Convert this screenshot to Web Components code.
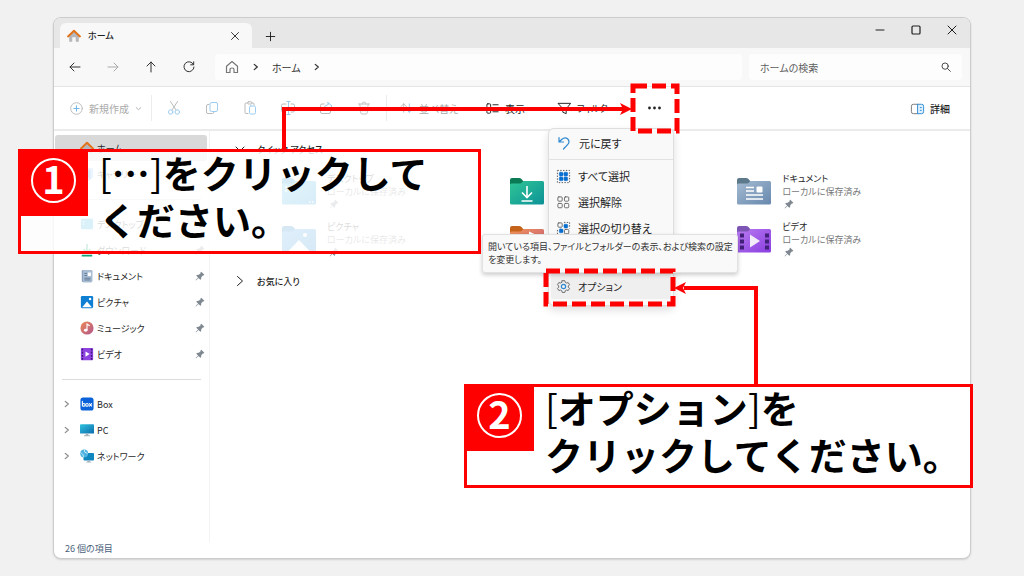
<!DOCTYPE html>
<html lang="ja">
<head>
<meta charset="utf-8">
<title>ホーム</title>
<style>
html{height:100%}
body{margin:0;min-height:100%;box-sizing:border-box;padding:17px 53px;background:#f1f1f1;display:flex;position:relative;
 font:10px/13px "Noto Sans CJK JP","Noto Sans",sans-serif;font-feature-settings:"palt","kern";color:#1f1f1f}
explorer-window{flex:1}
</style>
</head>
<body>
<explorer-window></explorer-window>
<context-menu></context-menu>
<tool-tip>開いている項目、ファイルとフォルダーの表示、および検索の設定<br>を変更します。</tool-tip>
<guide-lines></guide-lines>
<step-callout class="one" number="1"><i>[</i>…<i>]</i>をクリックして<br>ください。</step-callout>
<step-callout class="two" number="2"><i>[</i>オプション<i>]</i>を<br>クリックしてください。</step-callout>

<script>
const folder = (id, tab, a, b, art) => `<svg viewBox="0 0 34 28" width="34" height="28"><defs><linearGradient id="${id}" x1="0" y1="0" x2="1" y2="1"><stop stop-color="${a}"/><stop offset="1" stop-color="${b}"/></linearGradient></defs><path d="M0 9V3Q0 1 2 1H9Q10.500 1 11.500 2L13.500 4.500H30V9Z" fill="${tab}"/><path d="M0 8Q0 6.500 1.500 6.500H10.500L14 4H32.500Q34 4 34 5.500V26Q34 27.500 32.500 27.500H1.500Q0 27.500 0 26Z" fill="url(#${id})"/>${art}</svg>`;
const line = (d, extra = '', s = 16) => `<svg viewBox="0 0 16 16" width="${s}" height="${s}" fill="none" stroke="currentColor" stroke-linecap="round" stroke-linejoin="round" ${extra}>${d}</svg>`;
const dots = [[4,4],[9,4],[4,9],[9,9]], rings = [[2,2],[9,2],[2,9],[9,9]];
const grid4 = (filled) => filled.map((f,i)=>f?`<rect x="${dots[i][0]-.5}" y="${dots[i][1]-.5}" width="4" height="4" rx="1" fill="#0b6fd0" stroke="#0b6fd0" stroke-width=".5"/>`:`<rect x="${rings[i][0]}" y="${rings[i][1]}" width="4.600" height="4.600" rx="1"/>`).join('');
const ICONS = {
 homeColor:`<svg viewBox="0 0 16 16" width="14" height="14"><path d="M2.500 7L8 2.500 13.500 7V14.500H10V9.500H6V14.500H2.500Z" fill="#b5b7ba"/><path d="M1.200 8.500L8 2 14.800 8.500" fill="none" stroke="#e2731a" stroke-width="2.200" stroke-linecap="round" stroke-linejoin="round"/></svg>`,
 close:line('<path d="M4 4L12 12M12 4L4 12"/>','',14),
 closeBig:line('<path d="M4 4L12 12M12 4L4 12"/>'),
 plus:line('<path d="M8 3.500V12.500M3.500 8H12.500"/>','',15),
 min:line('<path d="M4 8H12"/>'),
 max:line('<rect x="4" y="4" width="8" height="8" rx="1" stroke-width="1.200"/>'),
 back:line('<path d="M13 8H3M7 4L3 8L7 12"/>'),
 forward:line('<path d="M3 8H13M9 4L13 8L9 12"/>'),
 up:line('<path d="M8 13V3M4 7L8 3L12 7"/>'),
 refresh:line('<path d="M12.500 5.500A5 5 0 1 0 13 8M12.700 2.800V5.800H9.700"/>'),
 home:line('<path d="M2.500 7.200L8 2.500L13.500 7.200V13.500H10V10.500Q10 9 8 9Q6 9 6 10.500V13.500H2.500Z" stroke="#777" stroke-width="1.200"/>'),
 chev:line('<path d="M6 5L9.500 8L6 11" stroke-width="1.400"/>','',14),
 chevBig:line('<path d="M5.500 3.500L10.500 8L5.500 12.500"/>'),
 chevDown:line('<path d="M4 6L8 10L12 6"/>'),
 search:line('<circle cx="7" cy="7" r="3.600"/><path d="M9.800 9.800L13 13"/>','',14),
 newItem:line('<circle cx="8" cy="8" r="6.200" stroke="#bbb"/><path d="M8 5.200V10.800M5.200 8H10.800" stroke="#6bb3e6"/>','',15),
 tinyDown:line('<path d="M4 6.500L8 10L12 6.500" stroke-width="1.600"/>','',9),
 cut:line('<path d="M4.500 1.500L10 10M11.500 1.500L6 10" stroke="#bbb"/><circle cx="4.700" cy="12" r="2.200"/><circle cx="11.300" cy="12" r="2.200"/>'),
 copy:line('<path d="M5 4.500H4Q2.500 4.500 2.500 6V12Q2.500 13.500 4 13.500H8.500Q10 13.500 10 12" stroke="#bbb"/><rect x="6" y="2.500" width="7.500" height="9" rx="1.500"/>'),
 paste:line('<path d="M6 13.500H4Q3 13.500 3 12.500V4Q3 3 4 3H5M10 3H11Q12 3 12 4V5" stroke="#bbb"/><rect x="5.500" y="1.800" width="4.500" height="2.200" rx="1" stroke="#bbb"/><rect x="7.500" y="6" width="6" height="8" rx="1.300"/>'),
 rename:line('<path d="M6 4H3Q1.500 4 1.500 5.500V10.500Q1.500 12 3 12H6M11 4H13Q14.500 4 14.500 5.500V10.500Q14.500 12 13 12H11" stroke="#bbb"/><path d="M8.500 1.500V14.500M6.800 1.500H10.200M6.800 14.500H10.200"/>'),
 share:line('<path d="M6 4H4Q2.500 4 2.500 5.500V12Q2.500 13.500 4 13.500H11Q12.500 13.500 12.500 12V10.500" stroke="#bbb"/><path d="M10 2.500L14 6L10 9.500V7.500Q7 7.500 5.500 9.500Q6 5 10 4.500Z"/>'),
 trash:line('<path d="M2.500 4H13.500M6 4Q6 2 8 2Q10 2 10 4M3.800 4L4.800 13Q5 14 6 14H10Q11 14 11.200 13L12.200 4M6.800 7V11M9.200 7V11" stroke="#c4c4c4"/>'),
 sort:line('<path d="M5 12V3M2 6L5 3L8 6" stroke="#bbb"/><path d="M11 3V12M8 9L11 12L14 9"/>','',15),
 view:line('<rect x="2" y="3" width="4" height="4" rx="1"/><rect x="2" y="9" width="4" height="4" rx="1"/><path d="M8.500 4H14M8.500 11.500H14"/>','',15),
 filter:line('<path d="M1.500 2.500H14.500L9.800 8.500V13.500L6.200 12V8.500Z"/>','',15),
 more:`<svg viewBox="0 0 16 16" width="16" height="16" fill="#222"><circle cx="2.500" cy="8" r="1.400"/><circle cx="7.500" cy="8" r="1.400"/><circle cx="12.500" cy="8" r="1.400"/></svg>`,
 details:line('<path d="M8.500 3.500H3.500Q1.500 3.500 1.500 5.500V11.500Q1.500 13.500 3.500 13.500H8.500" stroke="#777"/><path d="M8.500 3.500H12.500Q14.500 3.500 14.500 5.500V11.500Q14.500 13.500 12.500 13.500H8.500Z" fill="#dff0fc" stroke="#2a8cd8"/><path d="M11 7H12M11 10H12" stroke="#2a8cd8"/>','',15),
 pin:`<svg viewBox="0 0 16 16" width="10" height="10"><path d="M10 1L15 6L13.500 7.200L12.600 7L10 10L9.800 13L8.500 14L5.500 11L1.500 15L1 14.500L5 10.500L2 7.500L3 6.200L6 6L9 3.400L8.800 2.500Z" fill="#7f8890"/></svg>`,
 gallery:`<svg viewBox="0 0 16 16" width="14" height="14"><rect x="4" y="1" width="11" height="12" rx="1.500" fill="#8cc4f0"/><rect x="1" y="3" width="11" height="12" rx="1.500" fill="#1f83dc"/><path d="M2 14L6.500 9L11 14Z" fill="#fff"/></svg>`,
 desktop:`<svg viewBox="0 0 16 16" width="14" height="14"><rect x="1" y="2" width="14" height="12" rx="1.500" fill="#29a9e0"/><path d="M3 5H5M3 8H5" stroke="#fff"/></svg>`,
 down:`<svg viewBox="0 0 16 16" width="14" height="14" fill="none" stroke="#17a37a" stroke-width="2"><path d="M8 1V10M4 7L8 11L12 7M2 14.500H14"/></svg>`,
 doc:`<svg viewBox="0 0 16 16" width="14" height="14"><rect x="2" y="1" width="12" height="14" rx="1.500" fill="#8ba3bd"/><rect x="3.500" y="1" width="10.500" height="14" rx="1" fill="#a9bed4"/><path d="M5 5H8M5 7.500H8M5 10.500H12M5 12.500H12" stroke="#56708c"/><rect x="9" y="4" width="3.500" height="4" fill="#fff"/></svg>`,
 picture:`<svg viewBox="0 0 16 16" width="14" height="14"><rect x="1" y="1" width="14" height="14" rx="1.500" fill="#0f7fd4"/><path d="M2.500 14L8 7.500L13.500 14Z" fill="#fff"/><circle cx="11.500" cy="4.500" r="1.400" fill="#fff"/></svg>`,
 music:`<svg viewBox="0 0 16 16" width="14" height="14"><defs><linearGradient id="mu" x2="1" y2="1"><stop stop-color="#ee8a54"/><stop offset="1" stop-color="#b0568e"/></linearGradient></defs><circle cx="8" cy="8" r="7.500" fill="url(#mu)"/><ellipse cx="6.500" cy="10.500" rx="2" ry="1.700" fill="#fff"/><path d="M8 10.500V3.500L11 5.500" fill="none" stroke="#fff" stroke-width="1.300"/></svg>`,
 video:`<svg viewBox="0 0 16 16" width="14" height="14"><rect x="1" y="1" width="14" height="14" rx="1" fill="#8e43e0"/><path d="M2.800 2V15M13.200 2V15" stroke="#3f1679" stroke-width="1.600" stroke-dasharray="2 1.500"/><path d="M6.300 5L11 8L6.300 11Z" fill="#fff"/></svg>`,
 box:`<svg viewBox="0 0 16 16" width="14" height="14"><rect x=".5" y=".5" width="15" height="15" rx="3" fill="#0a61d8"/><g fill="none" stroke="#fff" stroke-width="1.200" stroke-linecap="round"><path d="M2.700 5V10"/><circle cx="4.300" cy="9" r="1.500"/><circle cx="8" cy="9" r="1.500"/><path d="M10.800 7.500L13.300 10.500M13.300 7.500L10.800 10.500"/></g></svg>`,
 pc:`<svg viewBox="0 0 16 16" width="14" height="14"><defs><linearGradient id="pc" x2="1" y2="1"><stop stop-color="#2fc3dd"/><stop offset="1" stop-color="#0c6cae"/></linearGradient></defs><rect x="0" y="1.500" width="16" height="10.500" rx="1" fill="url(#pc)"/><path d="M6.500 12H9.500V14H11.500V15H4.500V14H6.500Z" fill="#a8b2ba"/></svg>`,
 network:`<svg viewBox="0 0 16 16" width="14" height="14"><rect x="4" y="4.500" width="12" height="8.500" rx="1" fill="#0f86bd"/><path d="M8.500 13H11.500V14.500H13V15.500H7V14.500H8.500Z" fill="#a8b2ba"/><circle cx="4.800" cy="5" r="4.500" fill="#4fb2df"/><path d="M1 4Q4 6 4 9M5 1Q4 4 8.500 5" stroke="#d8f1fb" fill="none"/></svg>`,
 undo:line('<path d="M3 2.500V7H7.500M3.200 6.800L6 4.200Q9 1.500 11.800 4Q14.200 6.800 11.800 9.300L7.500 14" stroke="#2f88d0" stroke-width="1.200"/>'),
 selectAll:line('<rect x="1.500" y="1.500" width="13" height="13" stroke="#555" stroke-dasharray="1.500 1.500" stroke-linecap="butt"/>'+grid4([1,1,1,1]),'',15),
 selectNone:line(grid4([0,0,0,0]),'style="color:#666"',15),
 invert:line('<path d="M8.500 1.500H14.500V8M7 14.500H1.500V8.500" stroke="#555" stroke-dasharray="1.500 1.500" stroke-linecap="butt"/>'+grid4([0,1,1,0]),'style="color:#666"',15),
 gear:line('<path d="M6.600 1.800H9.400L9.900 3.600L11.200 4.300L13 3.800L14.400 6.200L13.100 7.500V8.700L14.400 10L13 12.300L11.200 11.800L9.900 12.500L9.400 14.300H6.600L6.100 12.500L4.800 11.800L3 12.300L1.600 10L2.900 8.700V7.500L1.600 6.200L3 3.800L4.800 4.300L6.100 3.600Z" stroke="#666"/><circle cx="8" cy="8" r="2.300" stroke="#2f88d0" stroke-width="1.300"/>','',15),
 fDesktop:folder('fd','#178fc8','#4cc3f0','#1690cf','<path d="M3 10H5M3 14H5M27 25H28.500M30 25H31.500" stroke="#fff" stroke-width="1.500"/>'),
 fPicture:folder('fp','#1479c4','#45a9ec','#1479c9','<path d="M5 27.500L17 15L29 27.500Z" fill="#fff"/><circle cx="23" cy="10" r="2" fill="#fff"/>'),
 fDown:folder('fw','#0b7b56','#2fc695','#0d9298','<path d="M17 9V20M12 15.500L17 20.500L22 15.500M11.500 24H22.500" fill="none" stroke="#fff" stroke-width="1.600"/>'),
 fMusic:folder('fm','#c5631b','#f0955a','#c95a7c','<path d="M20 22V8L25 10.500" fill="none" stroke="#fff" stroke-width="2"/>'),
 fDoc:folder('fo','#5c7a8b','#a5bbd2','#6788ad','<path d="M9 10.500H17M9 14H17M9 18H26M9 22H26" stroke="#fff" stroke-width="1.600"/><rect x="19.500" y="9.500" width="6" height="6" rx="1" fill="#fff"/>'),
 fVideo:folder('fv','#7d55b5','#b87af0','#8a3ee0','<path d="M5 8.500V26M30 8.500V26" stroke="#43207a" stroke-width="4" stroke-dasharray="4 2"/><path d="M13 9.500L23 16L13 22.500Z" fill="#f2ecfa"/>')
};
const BASE = `<style>:host,*{box-sizing:border-box}button,input{font:inherit;font-feature-settings:inherit;color:inherit;background:none;border:0;padding:0;margin:0}button{display:flex;align-items:center;justify-content:center;white-space:nowrap}a{color:inherit;text-decoration:none}</style>`;
const define = (name, html) => customElements.define(name, class extends HTMLElement {
 constructor(){ super(); this.attachShadow({mode:'open'}).innerHTML = BASE + (typeof html === 'function' ? '' : html); }
 connectedCallback(){ if (typeof html === 'function') this.shadowRoot.innerHTML = BASE + html(this); }
});
define('ui-icon', el => `<style>:host{display:inline-flex;flex:none}svg{display:block}</style>${ICONS[el.getAttribute('name')]}`);
define('title-bar', `<style>
:host{display:flex;height:30px;background:#e7e7e7;padding-left:6px}
.tab{display:flex;align-items:center;align-self:flex-end;width:192px;height:25px;padding:0 10px 0 7px;gap:7px;background:#f8f8f8;border-radius:6px 6px 0 0;font-weight:500;font-size:9px}
.tab span{flex:1}.add{width:37px;padding-top:6px}
.win{margin-left:auto;display:flex;height:23px}.win button{width:36px}</style>
<div class="tab"><ui-icon name="homeColor"></ui-icon><span>ホーム</span><button aria-label="タブを閉じる"><ui-icon name="close"></ui-icon></button></div>
<button class="add" aria-label="新しいタブ"><ui-icon name="plus"></ui-icon></button>
<div class="win"><button aria-label="最小化"><ui-icon name="min"></ui-icon></button><button aria-label="最大化"><ui-icon name="max"></ui-icon></button><button aria-label="閉じる"><ui-icon name="closeBig"></ui-icon></button></div>`);
define('nav-bar', `<style>
:host{display:flex;align-items:center;height:39px;background:#f8f8f8;border-bottom:1px solid #e5e5e5;padding:0 8px 0 2px;color:#333}
.go{width:38px;height:26px}.off{color:#aaa}
.address,.search{display:flex;align-items:center;height:26px;background:#fdfdfd;border-radius:4px}
.address{flex:1;margin-left:7px;padding-left:9px;gap:9px}.search{flex:0 0 213px;margin-left:7px;padding:0 9px 0 11px}
input{flex:1;min-width:0;outline:0}input::placeholder{color:#5e5e5e;opacity:1}</style>
<button class="go" aria-label="戻る"><ui-icon name="back"></ui-icon></button><button class="go off" aria-label="進む"><ui-icon name="forward"></ui-icon></button><button class="go" aria-label="上へ"><ui-icon name="up"></ui-icon></button><button class="go" aria-label="更新"><ui-icon name="refresh"></ui-icon></button>
<div class="address"><ui-icon name="home"></ui-icon><ui-icon name="chev"></ui-icon><a href="#home">ホーム</a><ui-icon name="chev"></ui-icon></div>
<div class="search"><input type="search" aria-label="ホームの検索" placeholder="ホームの検索"><ui-icon name="search"></ui-icon></div>`);
define('command-bar', `<style>
:host{display:flex;align-items:center;height:44px;border-bottom:2px solid #ebebeb;padding:0 20px 0 15px}
button{height:28px;gap:5px}.icon{width:38px}.off{color:#aaa}.blue{color:#9ccdf0}
hr{width:1px;height:26px;margin:0 3px;border:0;background:#ececec}
.new{width:79px;justify-content:flex-start}.sort{width:86px;margin-left:9px;justify-content:flex-start}.sort span{color:#aaa}
.view{width:72px;justify-content:flex-start}.filter{width:82px;justify-content:flex-start;font-size:9px}.more{width:32px}.details{margin-left:auto;font-weight:500}</style>
<button class="new off" disabled><ui-icon name="newItem"></ui-icon>新規作成<ui-icon name="tinyDown"></ui-icon></button><hr>
<button class="icon blue" aria-label="切り取り"><ui-icon name="cut"></ui-icon></button><button class="icon blue" aria-label="コピー"><ui-icon name="copy"></ui-icon></button><button class="icon blue" aria-label="貼り付け"><ui-icon name="paste"></ui-icon></button><button class="icon blue" aria-label="名前の変更"><ui-icon name="rename"></ui-icon></button><button class="icon blue" aria-label="共有"><ui-icon name="share"></ui-icon></button><button class="icon off" aria-label="削除"><ui-icon name="trash"></ui-icon></button><hr>
<button class="sort blue"><ui-icon name="sort"></ui-icon><span>並べ替え</span></button><button class="view"><ui-icon name="view"></ui-icon>表示</button><button class="filter"><ui-icon name="filter"></ui-icon>フィルター</button><button class="more" aria-label="もっと見る"><ui-icon name="more"></ui-icon></button>
<button class="details"><ui-icon name="details"></ui-icon>詳細</button>`);
define('side-item', el => `<style>
:host{display:block}a{display:flex;align-items:center;height:26px;padding:0 2px 0 5px;gap:3px;border-radius:3px;font-size:9px}
:host([current]) a{background:#d9d9d9}.tw{width:14px;display:flex;margin-right:3px;color:#888}span{flex:1;white-space:nowrap}</style>
<a href="#${el.getAttribute('icon')}"><div class="tw">${el.hasAttribute('expand')?'<ui-icon name="chev"></ui-icon>':''}</div><ui-icon name="${el.getAttribute('icon')}"></ui-icon><span><slot></slot></span>${el.hasAttribute('pinned')?'<ui-icon name="pin"></ui-icon>':''}</a>`);
define('side-pane', `<style>
:host{display:block;width:156px;flex:none;padding:4px 2px 0 1px;border-right:1px solid #f3f3f3}
hr{height:24px;margin:0 6px 0 7px;border:0;background:linear-gradient(#dcdcdc,#dcdcdc) center/100% 1px no-repeat}</style>
<nav><side-item icon="homeColor" current>ホーム</side-item><side-item icon="gallery">ギャラリー</side-item><hr>
<side-item icon="desktop" pinned>デスクトップ</side-item><side-item icon="down" pinned>ダウンロード</side-item><side-item icon="doc" pinned>ドキュメント</side-item><side-item icon="picture" pinned>ピクチャ</side-item><side-item icon="music" pinned>ミュージック</side-item><side-item icon="video" pinned>ビデオ</side-item><hr>
<side-item icon="box" expand>Box</side-item><side-item icon="pc" expand>PC</side-item><side-item icon="network" expand>ネットワーク</side-item></nav>`);
define('folder-tile', el => `<style>
:host{display:flex;align-items:center;height:48px;gap:11px;font-size:9px}p{margin:0;white-space:nowrap}.s{color:#777}.p{display:flex;height:13px;align-items:center;padding-left:2px}</style>
<ui-icon name="${el.getAttribute('icon')}"></ui-icon>${el.hasAttribute('bare')?'':'<div><p><slot></slot></p><p class="s">ローカルに保存済み</p><div class="p"><ui-icon name="pin"></ui-icon></div></div>'}`);
define('home-content', `<style>
:host{display:block;flex:1;min-width:0}h2{display:flex;align-items:center;gap:9px;height:36px;margin:0;padding-left:22px;font-size:9px;font-weight:500}
section{display:grid;grid-template-columns:repeat(3,1fr);padding:0 5px 0 72px}</style>
<h2><ui-icon name="chevDown"></ui-icon>クイック アクセス</h2>
<section><folder-tile icon="fDesktop">デスクトップ</folder-tile><folder-tile icon="fDown" bare></folder-tile><folder-tile icon="fDoc">ドキュメント</folder-tile><folder-tile icon="fPicture">ピクチャ</folder-tile><folder-tile icon="fMusic" bare></folder-tile><folder-tile icon="fVideo">ビデオ</folder-tile></section>
<h2><ui-icon name="chevBig"></ui-icon>お気に入り</h2>`);
define('explorer-window', `<style>
:host{display:flex;flex-direction:column;border:1px solid #ccc;border-radius:8px;background:#fff;overflow:hidden;box-shadow:0 1px 2px #0002}
main{display:flex;flex:1}footer{height:16px;padding-left:11px;color:#4a5f7c;font-size:9px}</style>
<title-bar></title-bar><nav-bar></nav-bar><command-bar></command-bar><main><side-pane></side-pane><home-content></home-content></main><footer>26 個の項目</footer>`);
define('menu-item', el => `<style>
:host{display:block}button{width:100%;height:26px;justify-content:flex-start;padding-left:5px;gap:7px;border-radius:3px;font-size:11px}:host([active]) button{background:#efefef;font-size:10px}</style>
<button role="menuitem"><ui-icon name="${el.getAttribute('icon')}"></ui-icon><slot></slot></button>`);
define('context-menu', `<style>
:host{position:absolute;left:548px;top:128px;width:126px;padding:1px 2px 6px;background:#f9f9f9;border:1px solid #dedede;border-radius:6px;box-shadow:0 4px 8px #0002}
hr{height:1px;margin:3px -2px;border:0;background:#e2e2e2}.last{margin-top:32px}</style>
<div role="menu"><menu-item icon="undo">元に戻す</menu-item><hr><menu-item icon="selectAll">すべて選択</menu-item><menu-item icon="selectNone">選択解除</menu-item><menu-item icon="invert">選択の切り替え</menu-item><menu-item class="last" icon="gear" active>オプション</menu-item></div>`);
define('tool-tip', `<style>:host{position:absolute;left:482px;top:234px;padding:5px 4px 6px 5px;background:#f9f9f9;border:1px solid #e2e2e2;border-radius:3px;box-shadow:0 2px 4px #0003;white-space:nowrap;font-size:9px;line-height:13px;color:#333}</style><slot></slot>`);
define('guide-lines', `<style>:host{position:absolute;left:0;top:0;pointer-events:none}svg{display:block}</style>
<svg width="1024" height="576" viewBox="0 0 1024 576" fill="none" stroke="#f00"><path d="M284 150V109H624M756 386V288H684" stroke-width="4"/><path d="M632 109L620 103L623 109L620 115ZM674 288L686 282L683 288L686 294Z" fill="#f00" stroke="none"/><rect x="633" y="86" width="44" height="45" stroke-width="5" stroke-dasharray="14 5"/><rect x="546" y="271" width="127" height="33" stroke-width="5" stroke-dasharray="14 5"/></svg>`);
define('step-callout', el => `<style>
:host{position:absolute;display:flex;align-items:flex-start;border:3px solid #f00;background:#ffffffd4;color:#000;font-size:38px;line-height:47px;font-weight:700;font-feature-settings:normal;white-space:nowrap}
:host(.one){left:18px;top:149px;width:463px;height:105px}:host(.two){left:464px;top:384px;width:509px;height:104px}
.n{width:67px;height:64px;flex:none;background:#f00;padding:6px 0 0 10px}.r{width:45px;height:45px;padding-bottom:6px;border:2px solid #fff;border-radius:50%;color:#fff;display:flex;align-items:center;justify-content:center;line-height:41px}
p{margin:-4px 0 0;padding-left:11px}::slotted(i){font-style:normal;font-weight:400}</style><div class="n"><div class="r">${el.getAttribute('number')}</div></div><p><slot></slot></p>`);
</script>
</body>
</html>
